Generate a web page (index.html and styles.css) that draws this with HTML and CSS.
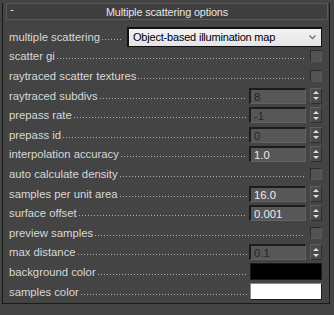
FILE: index.html
```
<!DOCTYPE html>
<html lang="en">
<head>
    <meta charset="UTF-8">
    <meta name="viewport" content="width=device-width, initial-scale=1.0">
    <title>Multiple scattering options</title>
    <link rel="stylesheet" href="styles.css">
</head>
<body>
    <div class="rollout">
        <div class="rollout-header">
            <span class="collapse">-</span>
            <span class="rollout-title">Multiple scattering options</span>
        </div>
        <div class="rows">
            <div class="row">
                <span class="label">multiple scattering</span>
                <span class="leader short"></span>
                <div class="dropdown">
                    <span>Object-based illumination map</span>
                    <svg class="chevron" width="7" height="5" viewBox="0 0 7 5"><polyline points="0.5,0.5 3.5,3.5 6.5,0.5" fill="none" stroke="#777" stroke-width="1.4"/></svg>
                </div>
            </div>
            <div class="row">
                <span class="label">scatter gi</span>
                <span class="leader wide"></span>
                <span class="checkbox"></span>
            </div>
            <div class="row">
                <span class="label">raytraced scatter textures</span>
                <span class="leader wide"></span>
                <span class="checkbox"></span>
            </div>
            <div class="row">
                <span class="label">raytraced subdivs</span>
                <span class="leader"></span>
                <span class="field disabled">8</span>
                <span class="spinner"><i class="up"></i><i class="down"></i></span>
            </div>
            <div class="row">
                <span class="label">prepass rate</span>
                <span class="leader"></span>
                <span class="field disabled">-1</span>
                <span class="spinner"><i class="up"></i><i class="down"></i></span>
            </div>
            <div class="row">
                <span class="label">prepass id</span>
                <span class="leader"></span>
                <span class="field disabled">0</span>
                <span class="spinner"><i class="up"></i><i class="down"></i></span>
            </div>
            <div class="row">
                <span class="label">interpolation accuracy</span>
                <span class="leader"></span>
                <span class="field">1.0</span>
                <span class="spinner"><i class="up"></i><i class="down"></i></span>
            </div>
            <div class="row">
                <span class="label">auto calculate density</span>
                <span class="leader wide"></span>
                <span class="checkbox"></span>
            </div>
            <div class="row">
                <span class="label">samples per unit area</span>
                <span class="leader"></span>
                <span class="field">16.0</span>
                <span class="spinner"><i class="up"></i><i class="down"></i></span>
            </div>
            <div class="row">
                <span class="label">surface offset</span>
                <span class="leader"></span>
                <span class="field">0.001</span>
                <span class="spinner"><i class="up"></i><i class="down"></i></span>
            </div>
            <div class="row">
                <span class="label">preview samples</span>
                <span class="leader wide"></span>
                <span class="checkbox"></span>
            </div>
            <div class="row">
                <span class="label">max distance</span>
                <span class="leader"></span>
                <span class="field disabled">0.1</span>
                <span class="spinner"><i class="up"></i><i class="down"></i></span>
            </div>
            <div class="row">
                <span class="label">background color</span>
                <span class="leader"></span>
                <span class="swatch black"></span>
            </div>
            <div class="row">
                <span class="label">samples color</span>
                <span class="leader"></span>
                <span class="swatch white"></span>
            </div>
        </div>
    </div>
</body>
</html>
```

FILE: styles.css
```
body {
    margin: 0;
    padding: 0;
    background-color: #444444;
    color: #d8d8d8;
    font-family: "Liberation Sans", Arial, sans-serif;
    font-size: 11.3px;
}

.rollout {
    margin: 11px 4px 0 2px;
    height: 300px;
    border: 1px solid #1a1a1a;
    border-top: 0;
}

.rollout-header {
    position: relative;
    margin: -8px 1px 0 3px;
    height: 15px;
    border: 1px solid #5a5a5a;
    background-color: #3f3f3f;
    display: flex;
    align-items: center;
    justify-content: center;
}

.collapse {
    position: absolute;
    left: 3px;
    top: -1px;
    color: #f0f0f0;
}

.rollout-title {
    color: #e6e6e6;
    font-size: 10.8px;
    letter-spacing: -0.1px;
}

.rows {
    padding: 7px 7px 0 6px;
}

.row {
    display: flex;
    align-items: center;
    height: 19.6px;
}

.label {
    white-space: nowrap;
}

.leader {
    flex: 1;
    height: 1px;
    margin: 5px 2px 0 2px;
    background: repeating-linear-gradient(to right, #b0b0b0 0 1px, transparent 1px 3px);
}

.leader.short {
    margin-right: 4px;
}

.leader.wide {
    margin-right: 6px;
}

.dropdown {
    box-sizing: border-box;
    width: 195px;
    height: 20px;
    display: flex;
    align-items: center;
    justify-content: space-between;
    padding: 0 5px 0 4px;
    border: 1px solid #111;
    border-top-width: 2px;
    border-left-width: 2px;
    background: linear-gradient(#f3f3f3, #e4e4e4);
    color: #000;
    font-size: 11px;
    letter-spacing: -0.2px;
}

.checkbox {
    width: 12px;
    height: 12px;
    box-sizing: border-box;
    border: 1px solid #2a2a2a;
    border-right-color: #5a5a5a;
    border-bottom-color: #5a5a5a;
    background-color: #535353;
}

.field {
    width: 57px;
    height: 16px;
    box-sizing: border-box;
    padding: 1px 0 0 3px;
    margin-right: 4px;
    border: 1px solid #626262;
    border-top: 2px solid #1c1c1c;
    border-left: 2px solid #1c1c1c;
    background-color: #575757;
    color: #ececec;
    line-height: 12px;
}

.field.disabled {
    color: #262626;
}

.spinner {
    width: 12px;
    height: 16px;
    box-sizing: border-box;
    border: 1px solid #2e2e2e;
    border-top-color: #5e5e5e;
    border-left-color: #5e5e5e;
    background-color: #4a4a4a;
    display: flex;
    flex-direction: column;
    align-items: center;
    justify-content: center;
    gap: 3px;
}

.spinner i {
    width: 0;
    height: 0;
    border-left: 3px solid transparent;
    border-right: 3px solid transparent;
}

.spinner .up {
    border-bottom: 3px solid #dddddd;
}

.spinner .down {
    border-top: 3px solid #dddddd;
}

.swatch {
    width: 72px;
    height: 17px;
    box-sizing: border-box;
    border: 1px solid #1a1a1a;
}

.swatch.black {
    background-color: #000;
}

.swatch.white {
    background-color: #fff;
    border-top-color: #8a8a8a;
    border-left-color: #8a8a8a;
}
```
